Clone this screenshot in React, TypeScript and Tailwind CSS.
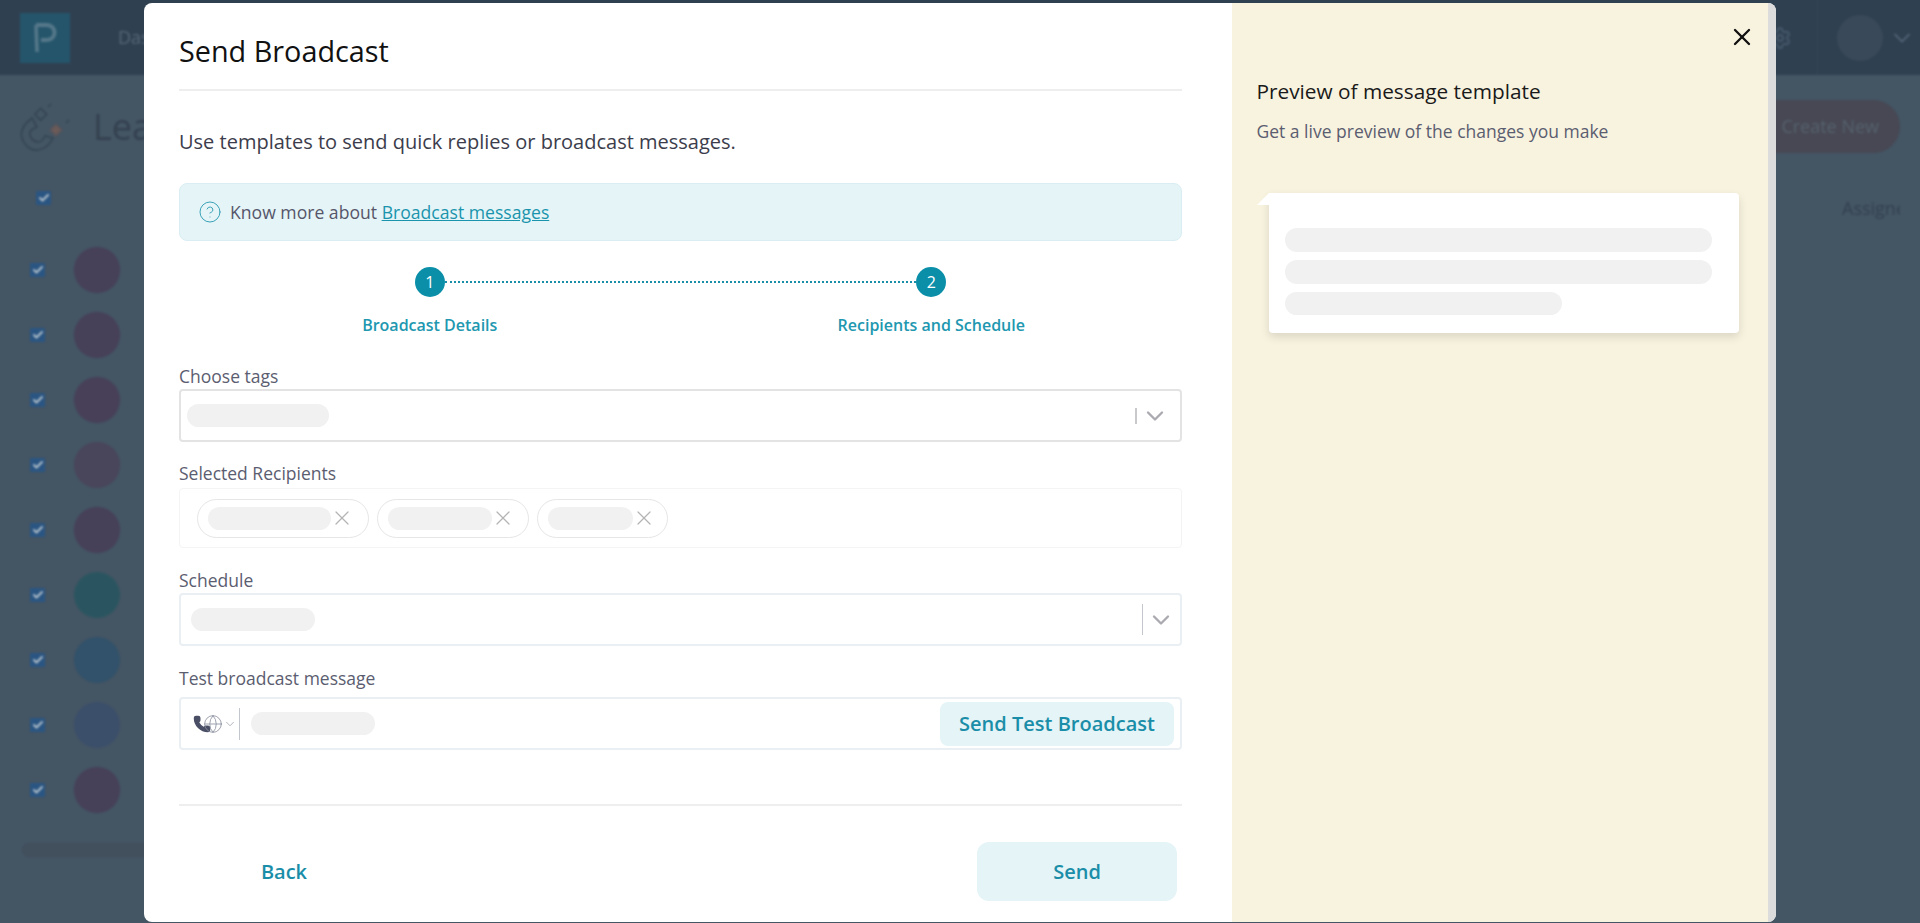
import { Check, ChevronDown, CircleHelp, Globe, Phone, Settings, X } from 'lucide-react'

const rowColors = ['bg-[#464059]', 'bg-[#464059]', 'bg-[#474058]', 'bg-[#49455b]', 'bg-[#464058]', 'bg-[#2a5560]', 'bg-[#31526a]', 'bg-[#3b4f6a]', 'bg-[#464059]']

function TickBox() {
  return (
    <div className="flex h-[14px] w-[15px] items-center justify-center rounded-[1px] bg-[#2a5582]">
      <Check className="h-[12px] w-[12px] text-[#b0bec9]" strokeWidth={4} />
    </div>
  )
}

function PageBehind() {
  return (
    <div className="-ml-1 -mt-1 h-[931px] w-[1928px] bg-[#445564] blur-[1px]">
      <div className="flex h-[79px] items-center bg-[#2f4051] pl-6 pr-[8px] pt-1">
        <div className="h-[50px] w-[50px] bg-[#25556b]">
          <svg viewBox="0 0 50 50" className="h-full w-full" fill="none" stroke="#55788a">
            <path d="M16 12L17 39" strokeWidth="3.5" />
            <path d="M16 12H27a7.5 7.5 0 0 1 0 15H21" strokeWidth="4" />
          </svg>
        </div>
        <span className="ml-[48px] text-[18px] text-[#566878]">Das</span>
        <Settings className="ml-auto h-6 w-6 text-[#4b5f70]" strokeWidth={1.5} />
        <div className="ml-[25px] h-[75px] w-px bg-[#354656]" />
        <div className="ml-[19px] h-[46px] w-[46px] rounded-full bg-[#39495a]" />
        <ChevronDown className="ml-[5px] h-[28px] w-[28px] text-[#56687a]" strokeWidth={1.5} />
      </div>
      <div className="flex h-[103px] items-center justify-between pl-6 pr-6">
        <div className="flex items-center">
          <svg viewBox="0 0 60 60" className="h-[60px] w-[60px]" fill="none" stroke="#344452" strokeWidth="1.6">
            <path d="M12 21C4 27 0 34 2 41c3 9 10 13 16 12 7-1 12-6 15-12l-8-2c-2 4-4 6-7 6-5 0-9-6-8-10 0-2 3-3 7-5z" />
            <path d="M20.7 11.3l6 6-6 6-6-6z" />
            <path d="M36 27l6 6-6 6-6-6z" fill="#6b5a58" stroke="#55555c" />
            <path d="M28 10l3-3M46 26l3-3" />
          </svg>
          <span className="ml-[13px] text-[36px] text-[#34414f]">Lea</span>
        </div>
        <div className="flex h-[53px] w-[200px] items-center justify-end rounded-full bg-[#474853] pr-[21px] text-[18px] text-[#56636f]">Create New</div>
      </div>
      <div className="flex h-[40px] items-center justify-between pl-[40px] pr-[24px]">
        <TickBox />
        <span className="mt-5 w-[58px] overflow-hidden whitespace-nowrap text-[18px] text-[#33414f]">Assigned</span>
      </div>
      <div className="flex flex-col gap-[19px] pl-[34px] pt-[29px]">
        {rowColors.map((color, i) => (
          <div key={i} className="flex h-[46px] items-center">
            <TickBox />
            <div className={`ml-[29px] h-[46px] w-[46px] rounded-full ${color}`} />
          </div>
        ))}
      </div>
      <div className="ml-[26px] mt-[30px] h-[14px] w-[1700px] rounded-full bg-[#424f5c]" />
    </div>
  )
}

function FieldLabel({ text, className }: { text: string; className: string }) {
  return <div className={`text-[17.5px] leading-6 text-[#5b5d70] ${className}`}>{text}</div>
}

function Bar({ className }: { className: string }) {
  return <div className={`h-[23px] shrink-0 rounded-full bg-[#f1f1f1] ${className}`} />
}

function Chip({ bar, width }: { bar: string; width: string }) {
  return (
    <div className={`flex h-[39px] items-center rounded-full border border-[#e6e6e6] pl-[10px] ${width}`}>
      <Bar className={bar} />
      <X className="-ml-px h-[24px] w-[24px] shrink-0 text-[#b4b4b4]" strokeWidth={1.25} />
    </div>
  )
}

export default function App() {
  return (
    <div className="relative h-[923px] w-[1920px] overflow-hidden bg-[#445564] font-['Open_Sans',sans-serif]">
      <PageBehind />
      <div className="absolute inset-0">
        <div className="ml-[144px] mt-[3px] flex h-[919px] w-[1632px] overflow-hidden rounded-lg bg-white">
          <div className="w-[1088px] pl-[35px] pr-[50px] pt-[28px]">
            <h1 className="border-b-2 border-[#eeeeee] pb-[18px] text-[28.8px] font-medium leading-10 text-[#111111]">Send Broadcast</h1>
            <p className="mt-[37px] text-[20px] leading-7 text-[#3c3d4c]">Use templates to send quick replies or broadcast messages.</p>

            <div className="mt-[27px] flex h-[58px] items-center rounded-lg border border-[#d9edf2] bg-[#e5f4f7] pl-[18px]">
              <CircleHelp className="h-[24px] w-[24px] text-[#3aa2b8]" strokeWidth={1} />
              <span className="ml-[8px] text-[17.6px] text-[#55566a]">Know more about <a className="text-[#1a94ad] underline">Broadcast messages</a></span>
            </div>

            <div className="relative mt-[26px] grid grid-cols-2 text-center">
              <div className="absolute left-[266px] right-[266px] top-[14px] border-t-2 border-dotted border-[#1a8ea8]" />
              {['Broadcast Details', 'Recipients and Schedule'].map((label, i) => (
                <div key={label} className="relative flex flex-col items-center">
                  <div className="flex h-[30px] w-[30px] items-center justify-center rounded-full bg-[#0b8fa9] text-[16px] font-medium text-white">{i + 1}</div>
                  <div className="mt-[16px] text-[16px] font-semibold leading-6 text-[#2197b0]">{label}</div>
                </div>
              ))}
            </div>

            <FieldLabel text="Choose tags" className="mt-[27px]" />
            <div className="mt-px flex h-[53px] items-center rounded border-2 border-[#e3e3e3] pl-[6px] pr-[11px]">
              <Bar className="w-[142px]" />
              <div className="ml-auto h-[16px] w-[2px] bg-[#c9c9cc]" />
              <ChevronDown className="ml-[4px] h-[28px] w-[28px] text-[#aaaab0]" strokeWidth={2} />
            </div>

            <FieldLabel text="Selected Recipients" className="mt-[19px]" />
            <div className="mt-[3px] flex h-[60px] items-center gap-[8px] rounded border border-[#f4f4f4] pl-[17px]">
              <Chip bar="w-[123px]" width="w-[172px]" />
              <Chip bar="w-[104px]" width="w-[152px]" />
              <Chip bar="w-[85px]" width="w-[131px]" />
            </div>

            <FieldLabel text="Schedule" className="mt-[20px]" />
            <div className="mt-px flex h-[53px] items-center rounded border-2 border-[#e9eff3] pl-[10px] pr-[5px]">
              <Bar className="w-[124px]" />
              <div className="ml-auto h-[31px] w-px bg-[#c3c6cc]" />
              <ChevronDown className="ml-[4px] h-[28px] w-[28px] text-[#aaaab0]" strokeWidth={2} />
            </div>

            <FieldLabel text="Test broadcast message" className="mt-[20px]" />
            <div className="mt-[7px] flex h-[53px] items-center rounded border-2 border-[#e9eff3] pl-[12px] pr-[6px]">
              <div className="flex items-center">
                <Phone className="h-[18px] w-[18px] fill-[#4a4f66] text-[#4a4f66]" />
                <Globe className="-ml-[8px] h-[20px] w-[20px] text-[#8d90a0]" strokeWidth={1} />
                <ChevronDown className="h-[14px] w-[14px] text-[#a9abb5]" strokeWidth={1.5} />
              </div>
              <div className="ml-[2px] h-[32px] w-px bg-[#c3c6cc]" />
              <Bar className="ml-[11px] w-[124px]" />
              <button className="ml-auto h-[44px] w-[234px] rounded-lg bg-[#e5f4f7] text-[20px] font-semibold text-[#1a8ea8]">Send Test Broadcast</button>
            </div>

            <div className="mt-[54px] h-[2px] bg-[#eeeeee]" />

            <div className="mt-[36px] flex h-[59px] items-center justify-between pl-[5px] pr-[5px]">
              <button className="h-[59px] w-[200px] text-[20px] font-semibold text-[#1a8ea8]">Back</button>
              <button className="h-[59px] w-[200px] rounded-xl bg-[#e5f4f7] text-[20px] font-semibold text-[#1a8ea8]">Send</button>
            </div>
          </div>

          <div className="relative w-[536px] bg-[#f8f3df] pl-[24.5px] pt-[75px]">
            <X className="absolute right-[12px] top-[20px] h-[28px] w-[28px] text-[#111111]" strokeWidth={2} />
            <h2 className="text-[20.8px] font-medium leading-[26px] text-[#1a1a1a]">Preview of message template</h2>
            <p className="mt-[14px] text-[17.5px] leading-[26px] text-[#5b5d70]">Get a live preview of the changes you make</p>
            <div className="relative ml-[12.5px] mt-[49px] flex h-[140px] w-[470px] flex-col gap-[8px] rounded-r rounded-bl bg-white pl-[16px] pt-[35px] shadow-[0_4px_10px_rgba(0,0,0,0.12)]">
              <div className="absolute -left-[12px] top-0 h-0 w-0 border-r-[12px] border-t-[12px] border-r-white border-t-transparent" />
              <div className="h-[24px] w-[427px] rounded-full bg-[#f1f1f1]" />
              <div className="h-[24px] w-[427px] rounded-full bg-[#f1f1f1]" />
              <div className="h-[23px] w-[277px] rounded-full bg-[#f1f1f1]" />
            </div>
          </div>
          <div className="w-[8px] bg-[#dcdcdc]" />
        </div>
      </div>
    </div>
  )
}
